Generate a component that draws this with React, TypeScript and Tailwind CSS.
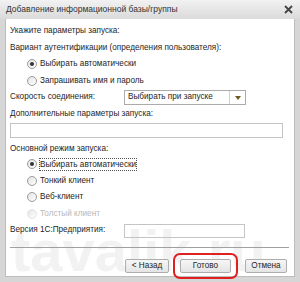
import React from "react";

function Radio({ checked, disabled, label, focus }: { checked?: boolean; disabled?: boolean; label: string; focus?: boolean }) {
  return (
    <div className="flex items-center h-[16.5px] pl-[17px] gap-[3px]">
      <span
        className={
          "w-[10px] h-[10px] rounded-full border flex items-center justify-center bg-gradient-to-br from-[#e4e4e4] to-white " +
          (disabled ? "border-[#e4e4e4]" : "border-[#9a9a9a]")
        }
      >
        {checked && <span className="w-[4px] h-[4px] rounded-full bg-[#333]" />}
      </span>
      <span
        className={
          (disabled ? "text-[#b8b8b8] " : "text-[#1e1e1e] ") +
          (focus ? "outline outline-1 outline-dotted outline-[#555] leading-[11px]" : "")
        }
      >
        {label}
      </span>
    </div>
  );
}

function Btn({ children, className = "" }: { children: React.ReactNode; className?: string }) {
  return (
    <div
      className={
        "h-[14px] border border-[#adadad] rounded-[2px] bg-gradient-to-b from-[#f6f6f6] to-[#e4e4e4] flex items-center justify-center text-[#1e1e1e] " +
        className
      }
    >
      {children}
    </div>
  );
}

export default function App() {
  return (
    <div
      className="w-[300px] h-[282px] bg-[#d6d6d6] flex flex-col overflow-hidden text-[8.2px]"
      style={{ fontFamily: '"Liberation Sans", Arial, sans-serif' }}
    >
      <div className="h-[19px] bg-gradient-to-b from-[#f2f2f2] to-[#dadada] flex items-center pl-[6px] pr-[7px] text-[#333] text-[8.5px]">
        <span className="flex-1">Добавление информационной базы/группы</span>
        <svg width="9" height="9" viewBox="0 0 9 9">
          <path d="M1 1L8 8M8 1L1 8" stroke="#444" strokeWidth="1.8" />
        </svg>
      </div>
      <div className="relative flex-1 mx-[5px] mb-[5px] bg-white border-l border-r border-b border-[#bdbdbd] pl-[4px] pr-[7px] pt-[4px]">
        <div className="absolute inset-0 overflow-hidden pointer-events-none select-none">
          <div className="absolute left-[5px] top-[203px] text-[58px] font-bold text-[#f2f2f2] leading-none">
            tavalik.ru
          </div>
        </div>
        <div className="relative flex flex-col">
          <div className="h-[16.5px] flex items-center text-[#1e1e1e]">Укажите параметры запуска:</div>
          <div className="h-[16.5px] flex items-center text-[#1e1e1e]">Вариант аутентификации (определения пользователя):</div>
          <Radio checked label="Выбирать автоматически" />
          <Radio label="Запрашивать имя и пароль" />
          <div className="h-[17px] flex items-center text-[#1e1e1e]">
            <span className="w-[114px]">Скорость соединения:</span>
            <div className="w-[122px] h-[15px] border border-[#ababab] flex items-center">
              <span className="flex-1 pl-[3px]">Выбирать при запуске</span>
              <div className="w-[16px] h-full border-l border-[#cfcfcf] flex items-center justify-center">
                <svg width="6" height="4" viewBox="0 0 6 4">
                  <path d="M0 0H6L3 4Z" fill="#6b5a1e" />
                </svg>
              </div>
            </div>
          </div>
          <div className="h-[16px] flex items-center text-[#1e1e1e]">Дополнительные параметры запуска:</div>
          <div className="h-[15px] w-[273px] border border-[#c4c4c4] mt-[1px]" />
          <div className="h-[17px] flex items-end text-[#1e1e1e]">Основной режим запуска:</div>
          <div className="mt-[1px]" />
          <Radio checked focus label="Выбирать автоматически" />
          <Radio label="Тонкий клиент" />
          <Radio label="Веб-клиент" />
          <Radio disabled label="Толстый клиент" />
          <div className="h-[17px] flex items-center text-[#1e1e1e]">
            <span className="w-[114px]">Версия 1С:Предприятия:</span>
            <div className="w-[121px] h-[14px] border border-[#c4c4c4]" />
          </div>
          <div className="mt-[8px] h-px w-[279px] bg-[#a0a0a0]" />
          <div className="flex mt-[11px] pl-[115px]">
            <Btn className="w-[47px]">&lt; Назад</Btn>
            <div className="ml-[4px] px-[5px] py-[4px] border-[2px] border-[#e0201e] rounded-[7px] -my-[6px]">
              <Btn className="w-[51px]">Готово</Btn>
            </div>
            <Btn className="w-[45px] ml-[7px]">Отмена</Btn>
          </div>
        </div>
      </div>
    </div>
  );
}
